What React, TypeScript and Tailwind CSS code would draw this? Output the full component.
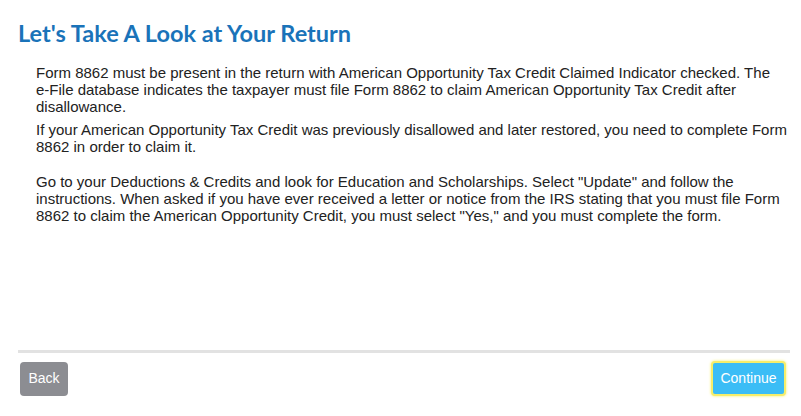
export default function App() {
    return (
        <div className="w-[801px] h-[416px] bg-white flex flex-col pl-[18px] pr-[11px] font-['Liberation_Sans',Arial,sans-serif]">
            {/* Heading */}
            <h1 className="mt-[19px] text-[23.5px] leading-[28px] font-bold text-[#1a73b9] font-['Lato','Open_Sans',sans-serif]">
                Let's Take A Look at Your Return
            </h1>

            {/* Body */}
            <div className="mt-[17px] pl-[18px] text-[15px] leading-[17px] text-[#222] whitespace-nowrap">
                <p>
                    Form 8862 must be present in the return with American Opportunity Tax Credit Claimed Indicator checked. The
                    <br />
                    e-File database indicates the taxpayer must file Form 8862 to claim American Opportunity Tax Credit after
                    <br />
                    disallowance.
                </p>
                <p className="mt-[6px]">
                    If your American Opportunity Tax Credit was previously disallowed and later restored, you need to complete Form
                    <br />
                    8862 in order to claim it.
                </p>
                <p className="mt-[18px]">
                    Go to your Deductions &amp; Credits and look for Education and Scholarships. Select "Update" and follow the
                    <br />
                    instructions. When asked if you have ever received a letter or notice from the IRS stating that you must file Form
                    <br />
                    8862 to claim the American Opportunity Credit, you must select "Yes," and you must complete the form.
                </p>
            </div>

            {/* Footer */}
            <div className="mt-auto mb-[20px] border-t-[3px] border-[#e2e2e2] pt-[8px] flex items-center justify-between">
                <button className="ml-[2px] w-[48px] h-[34px] rounded-[4px] bg-[#8c8d92] text-white text-[14px]">
                    Back
                </button>
                <button className="mr-[4px] w-[75px] h-[35px] rounded-[4px] bg-[#3bbdf6] text-white text-[14px] border-2 border-[#f6ee6a] shadow-[0_0_3px_#f6ee6a]">
                    Continue
                </button>
            </div>
        </div>
    );
}
